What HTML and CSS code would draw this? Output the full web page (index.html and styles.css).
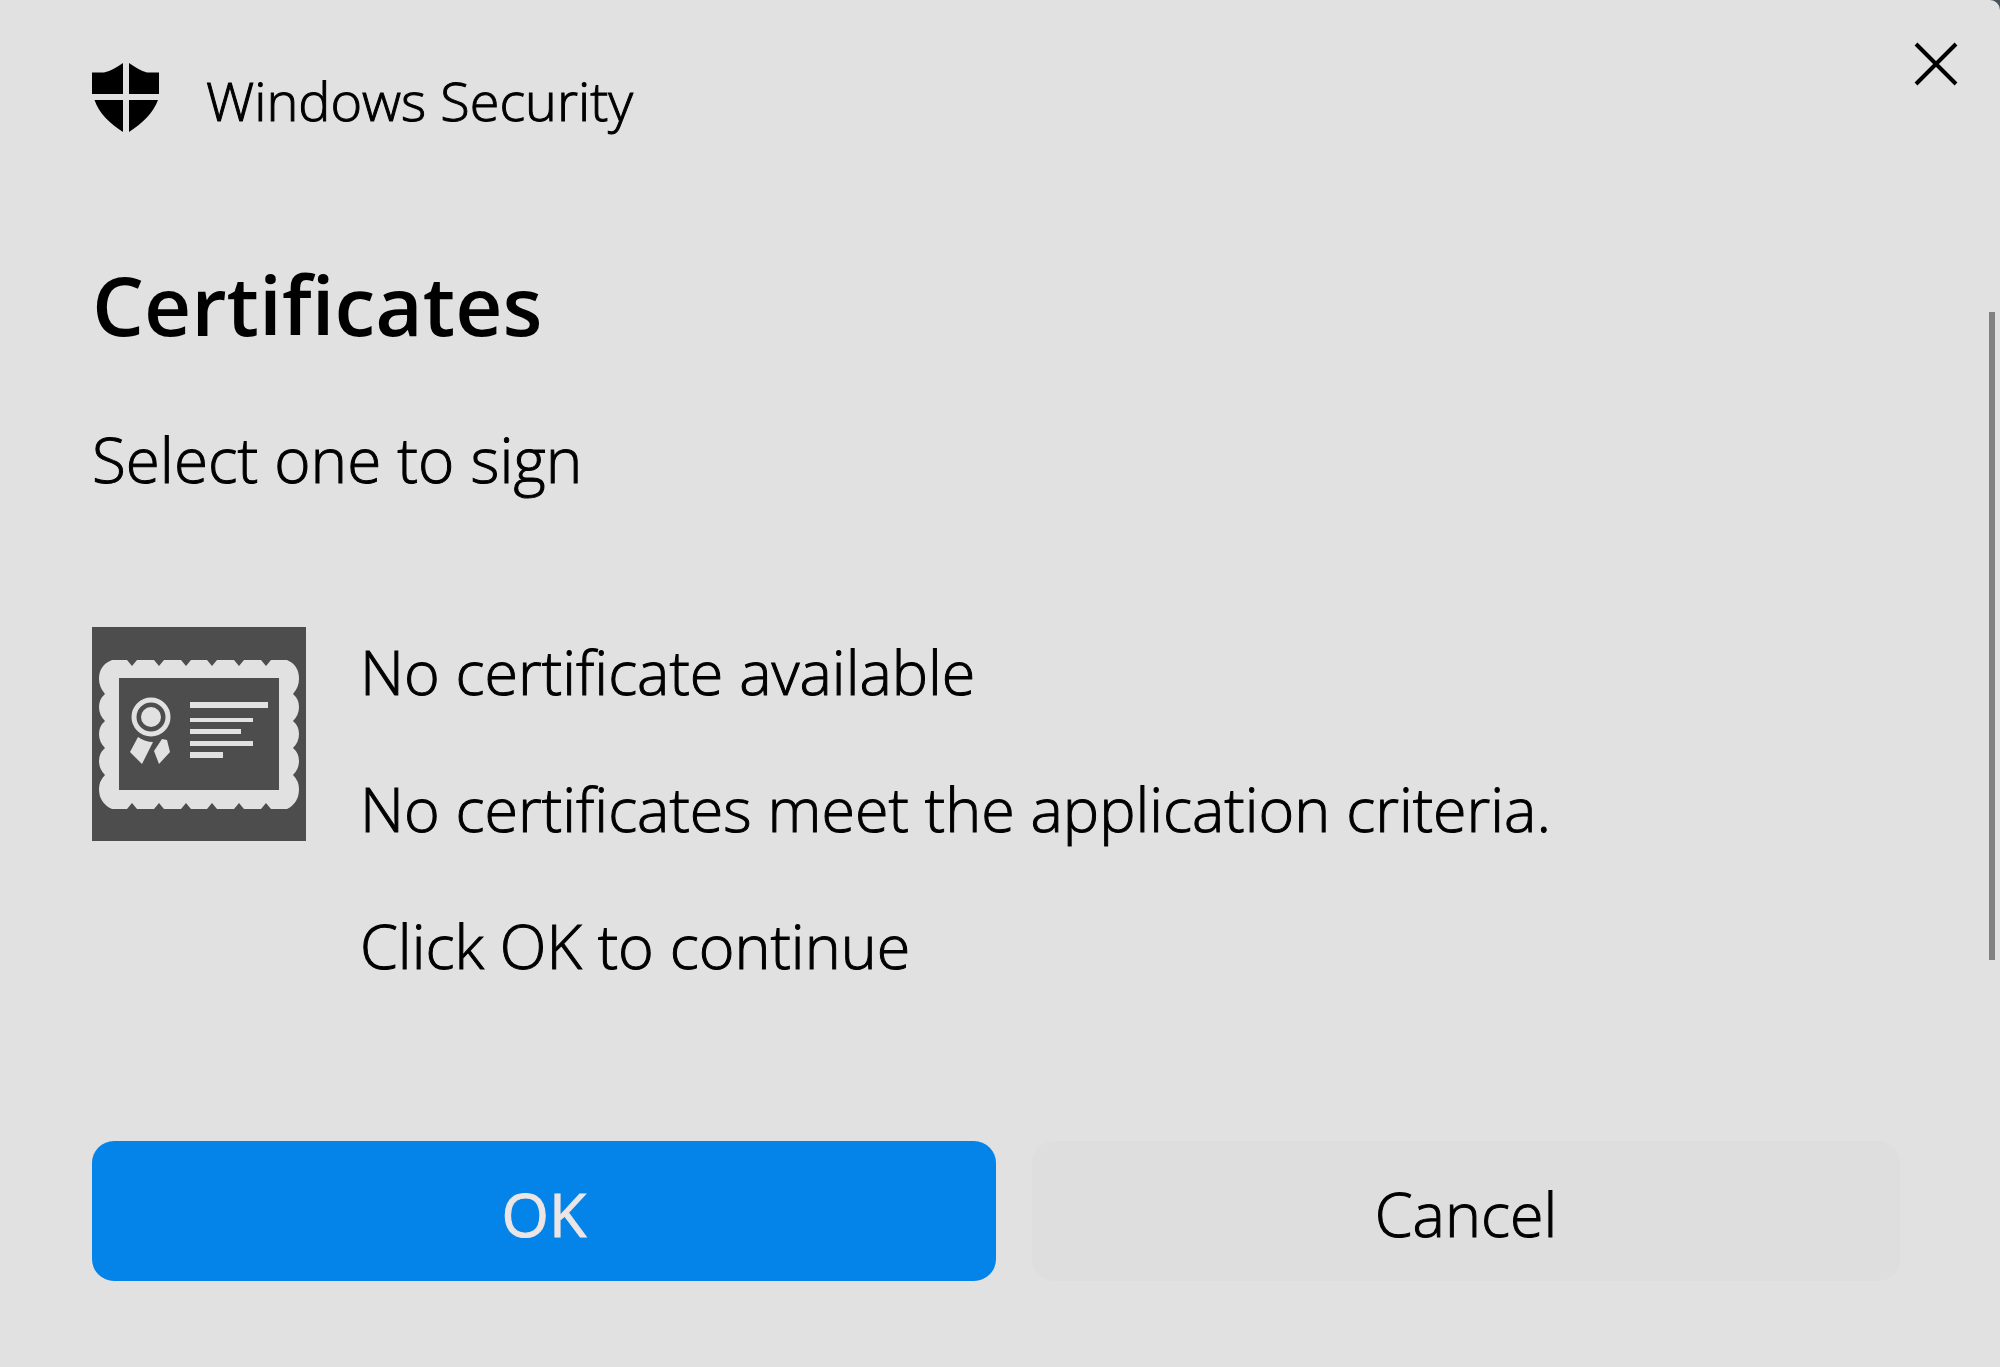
FILE: index.html
```html
<!DOCTYPE html>
<html lang="en">
<head>
<meta charset="UTF-8">
<meta name="viewport" content="width=device-width, initial-scale=1.0">
<title>Windows Security</title>
	<link rel="stylesheet" href="styles.css">
</head>
<body>
	<div class="dialog" role="dialog" aria-labelledby="title">
		<header class="titlebar">
			<svg class="shield" viewBox="0 0 68 70" aria-hidden="true">
				<path d="M31 0v31H0V9.500H12C19 8 25 4 31 0zM37 0c6 4 12 8 18 9.500H67V31H37zM2.500 37H31v32C17 60 7 50 2.500 37zM37 37H66C61 50 51 60 37 69z"/>
			</svg>
			<span class="app-name">Windows Security</span>
			<button type="button" class="close" aria-label="Close">
				<svg viewBox="0 0 44 44" aria-hidden="true"><path d="M2 2l40 40M42 2L2 42"/></svg>
			</button>
		</header>

		<main class="content">
			<h1 id="title">Certificates</h1>
			<p class="lead">Select one to sign</p>

			<section class="cert">
				<svg class="cert-icon" viewBox="0 0 214 214" aria-hidden="true">
					<rect width="214" height="214" fill="#4d4d4d"/>
					<path class="light" d="M20 33H35l5 6 5-6H62l5 6 5-6H89l5 6 5-6H115l5 6 5-6H142l5 6 5-6H169l5 6 5-6H195Q207 38 207 52Q207 60 201 67Q207 72 207 80T201 94Q207 99 207 107T201 121Q207 126 207 134T201 148Q207 154 207 162Q207 176 195 182H179l-5-6-5 6H152l-5-6-5 6H125l-5-6-5 6H99l-5-6-5 6H72l-5-6-5 6H45l-5-6-5 6H20Q7 176 7 162Q7 154 13 148Q7 142 7 134T13 121Q7 115 7 107T13 94Q7 88 7 80T13 67Q7 60 7 52Q7 38 20 33z"/>
					<path fill="#4d4d4d" d="M27 51h160v112H27z"/>
					<circle cx="59" cy="90" r="17" fill="none" stroke="#e1e1e1" stroke-width="5"/>
					<circle class="light" cx="59" cy="90" r="10"/>
					<path class="light" d="M46 110q7 5 15 5L50 137l-12-12zM70 112l5 1 3 12-11 12-5-13z"/>
					<path class="light" d="M98 75h78v6H98zM98 91h63v4H98zM98 102h51v5H98zM98 114h63v5H98zM98 125h33v6H98z"/>
				</svg>
				<div class="cert-text">
					<p>No certificate available</p>
					<p>No certificates meet the application criteria.</p>
					<p>Click OK to continue</p>
				</div>
			</section>
		</main>

		<footer class="actions">
			<button type="button" class="btn primary">OK</button>
			<button type="button" class="btn">Cancel</button>
		</footer>
		<div class="scrollbar"></div>
	</div>
</body>
</html>
```

FILE: styles.css
```css
* {
	box-sizing: border-box;
}
body {
	margin: 0;
	background: #46535a;
	color: #000;
	font-family: "Segoe UI", "Open Sans", "Noto Sans", sans-serif;
	font-weight: 300;
}
h1, p {
	margin: 0;
}
.dialog {
	position: relative;
	min-height: 100vh;
	padding: 42px 100px 84px 92px;
	background: #e1e1e1;
	border-top-right-radius: 10px;
}
.titlebar {
	display: flex;
	align-items: flex-start;
	margin-right: -58px;
}
.shield {
	width: 68px;
	height: 70px;
	margin-top: 21px;
}
.app-name {
	flex: 1;
	margin-left: 46px;
	margin-top: 18px;
	font-size: 54px;
	line-height: 80px;
}
/* light weight is a bit thin on the grey */
.app-name, .lead, .cert-text, .btn {
	-webkit-text-stroke: 1px currentColor;
}
.close {
	width: 44px;
	height: 44px;
	padding: 0;
	border: 0;
	background: none;
}
.close svg {
	display: block;
	fill: none;
	stroke: #000;
	stroke-width: 4;
}
h1 {
	margin-top: 104px;
	font-size: 82px;
	font-weight: 600;
	line-height: 120px;
}
.lead {
	margin-top: 55px;
	font-size: 62px;
	line-height: 80px;
}
.cert {
	display: flex;
	margin-top: 128px;
}
.cert-icon {
	flex: none;
	width: 214px;
	height: 214px;
}
.light {
	fill: #e1e1e1;
}
.cert-text {
	margin-left: 54px;
	font-size: 61px;
	line-height: 80px;
}
.cert-text p {
	margin: 5px 0 57px;
}
.actions {
	display: grid;
	grid-template-columns: 904fr 868fr;
	gap: 36px;
	margin-top: 98px;
}
.btn {
	height: 140px;
	padding: 4px 0 0;
	border: 0;
	border-radius: 22px;
	background: #dedede;
	color: #000;
	font: inherit;
	font-size: 61px;
}
.primary {
	background: #0483e8;
	color: #ebe5e5;
	font-weight: 400;
}
.scrollbar {
	position: absolute;
	top: 312px;
	right: 5px;
	width: 6px;
	height: 648px;
	background: #828282;
}
```
